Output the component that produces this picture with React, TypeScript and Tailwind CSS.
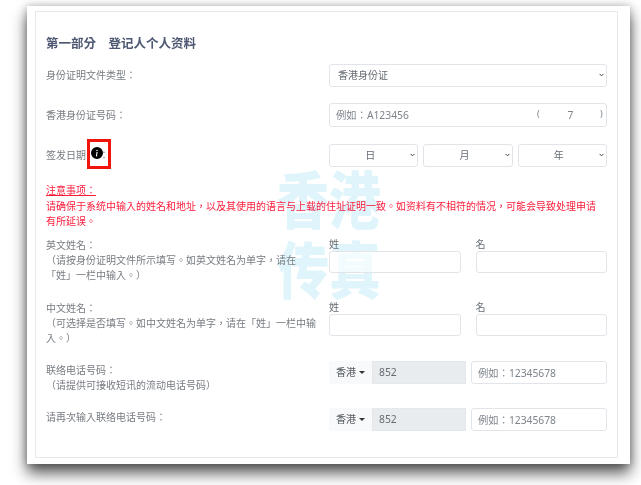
import { BsInfoCircleFill } from "react-icons/bs";

const font = "font-['Noto_Sans','Noto_Sans_CJK_TC',sans-serif]";
const field = "h-[22px] rounded-[3px] border border-[#e1e5ea]";
const ph = "placeholder:text-[#7d848b] text-[10.3px] px-[6px] outline-none w-full min-w-0";

function Select({ label, center }: { label: string; center?: boolean }) {
  return (
    <div className="relative flex-1 min-w-0 flex">
      <select
        defaultValue={label}
        className={`${field} bg-white appearance-none h-[23px] w-full text-[10px] text-[#666c73] ${center ? "[text-align-last:center] pr-[7px]" : "pl-[8px]"}`}
      >
        <option>{label}</option>
      </select>
      <svg viewBox="0 0 6 4" className="absolute right-[3px] top-[9px] w-[5px] h-[4px] pointer-events-none">
        <path d="M0.7 0.7 L3 3 L5.3 0.7" fill="none" stroke="#444" strokeWidth="1.2" />
      </svg>
    </div>
  );
}

function NameInputs() {
  return (
    <div className="flex gap-[15px] w-[278px]">
      {["姓", "名"].map((t) => (
        <div key={t} className="flex-1 min-w-0">
          <div className="h-[13px] text-[10px] leading-[10px] text-[#666c73] -mt-[1px]">{t}</div>
          <input className={`${field} ${ph} block bg-white/60 -mt-[1px]`} />
        </div>
      ))}
    </div>
  );
}

function Phone() {
  return (
    <div className="flex w-[278px] gap-[5px]">
      <div className="flex flex-[0_0_137px] h-[23px]">
        <div className="w-[43px] bg-[#f8f9fa] flex items-center pl-[7px] gap-[3px] text-[10px] text-[#555b62] rounded-l-[3px]">
          香港
          <span className="border-x-[3px] border-x-transparent border-t-[3px] border-t-[#333] mb-[1px]" />
        </div>
        <div className="flex-1 bg-[#e9ecef] border border-[#e4e7eb] flex items-center pl-[6px] text-[10.3px] text-[#666c73]">852</div>
      </div>
      <input placeholder="例如：12345678" className={`${field} ${ph} bg-white h-[23px] flex-1`} />
    </div>
  );
}

export default function App() {
  return (
    <div className={`${font} w-[641px] h-[485px] bg-white overflow-hidden pl-[27px] pt-[6px] blur-[0.4px]`}>
      <div className="w-[603px] h-[458px] bg-white pl-[8px] pt-[5px] shadow-[0_9px_14px_rgba(0,0,0,0.66),0_0_8px_rgba(0,0,0,0.25)]">
        <div className="relative w-[583px] h-[447px] border border-[#e6e8ea] pl-[10px] pr-[10px] text-[10px] leading-[15px] text-[#777c82]">
          <div aria-hidden className="absolute left-[241px] top-[165px] w-[104px] text-[52px] leading-[58px] font-black text-[#dff5fb] text-center scale-y-[1.2]">
            香港<br />传真
          </div>

          <div className="relative">
            <h2 className="pt-[24px] h-[52px] text-[12.5px] leading-[16px] font-bold text-[#4e5873]">第一部分　登记人个人资料</h2>

            <div className="flex justify-between items-center h-[22px]">
              <div>身份证明文件类型：</div>
              <div className="flex w-[278px]"><Select label="香港身份证" /></div>
            </div>

            <div className="flex justify-between items-center h-[24px] mt-[17px]">
              <div>香港身份证号码：</div>
              <div className="w-[278px] h-[24px] rounded-[3px] border border-[#e1e5ea] flex items-center pl-[6px] text-[10.3px] text-[#7d848b]">
                <span className="flex-1">例如：A123456</span>
                <span className="w-[4px] -mt-[3px] text-[9px]">(</span>
                <span className="w-[59px] text-center">7</span>
                <span className="w-[6px] -mt-[3px] text-[9px]">)</span>
              </div>
            </div>

            <div className="flex justify-between items-center h-[23px] mt-[17px]">
              <div className="flex items-center">
                <span>签发日期</span>
                <span className="relative flex w-[23px] justify-end">
                  <BsInfoCircleFill className="absolute left-[5px] -top-[1px] w-[12px] h-[12px] text-black" />
                  <span className="absolute left-[1px] -top-[9px] w-[24px] h-[30px] border-[3px] border-solid border-[#f0140a]" />
                  ：
                </span>
              </div>
              <div className="flex gap-[5px] w-[278px]">
                <Select label="日" center />
                <Select label="月" center />
                <Select label="年" center />
              </div>
            </div>

            <div className="mt-[16px] text-[#fb1c3a] leading-[15px]">
              <div className="underline">注意事项：</div>
              <div className="w-[558px] leading-[14.5px] mt-[1px]">请确保于系统中输入的姓名和地址，以及其使用的语言与上载的住址证明一致。如资料有不相符的情况，可能会导致处理申请有所延误。</div>
            </div>

            <div className="flex justify-between mt-[10px] h-[63px]">
              <div className="w-[270px]">英文姓名：<br />（请按身份证明文件所示填写。如英文姓名为单字，请在「姓」一栏中输入。）</div>
              <div className="pt-[2px]"><NameInputs /></div>
            </div>

            <div className="flex justify-between h-[62px]">
              <div className="w-[270px]">中文姓名：<br />（可选择是否填写。如中文姓名为单字，请在「姓」一栏中输入。）</div>
              <div className="pt-[2px]"><NameInputs /></div>
            </div>

            <div className="flex justify-between h-[47px]">
              <div className="w-[270px]">联络电话号码：<br />（请提供可接收短讯的流动电话号码）</div>
              <div className="-mt-[2px]"><Phone /></div>
            </div>

            <div className="flex justify-between">
              <div className="w-[270px]">请再次输入联络电话号码：</div>
              <div className="-mt-[2px]"><Phone /></div>
            </div>
          </div>
        </div>
      </div>
    </div>
  );
}
